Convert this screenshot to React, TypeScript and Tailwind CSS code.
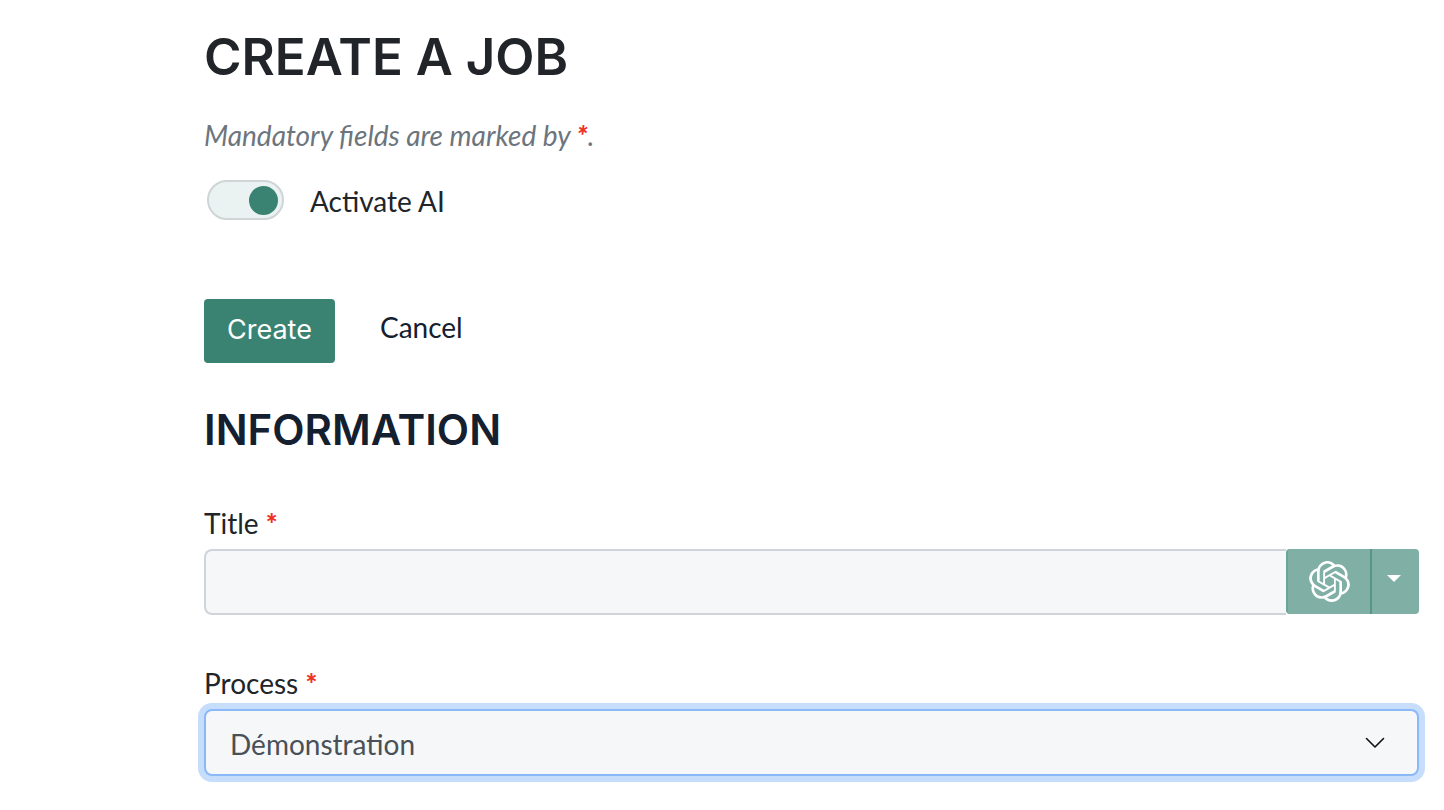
import { useState } from "react";
import { SiOpenai } from "react-icons/si";

function Required() {
  return <span className="font-black text-[#ee3124]">*</span>;
}

export default function App() {
  const [ai, setAi] = useState(true);
  const [title, setTitle] = useState("");
  const [process, setProcess] = useState("demo");

  return (
    <main className="bg-white pt-7 pr-[25px] pb-8 pl-51 font-['Lato',sans-serif] text-[28px] leading-10 text-[#212529]">
      <h1 className="font-['Inter',sans-serif] text-[51px] leading-[58px] font-semibold">CREATE A JOB</h1>
      <p className="mt-[29px] text-[#6c757d] italic">
        Mandatory fields are marked by <Required />.
      </p>

      <div className="mt-6 ml-[3px] flex items-center">
        <input
          id="ai"
          type="checkbox"
          role="switch"
          checked={ai}
          onChange={(e) => setAi(e.target.checked)}
          className="flex h-10 w-[77px] appearance-none items-center rounded-full border-2 border-[#cfd4d6] bg-[#eaf3f2] px-1 before:size-[29px] before:rounded-full before:bg-[#6c757d] checked:justify-end checked:before:bg-[#3a8373]"
        />
        <label htmlFor="ai" className="pt-0.5 pl-[26px]">
          Activate AI
        </label>
      </div>

      <div className="mt-[78px] flex items-start">
        <button
          type="button"
          className="h-16 rounded bg-[#3a8373] px-[23px] pb-0.5 font-['Inter',sans-serif] text-[27px] text-white"
        >
          Create
        </button>
        <a href="#cancel" className="ml-[45px] pt-2 text-[#14202f]">
          Cancel
        </a>
      </div>

      <h2 className="mt-[42px] font-['Inter',sans-serif] text-[42px] leading-[50px] font-semibold text-[#14202f]">
        INFORMATION
      </h2>

      <div className="mt-12">
        <label htmlFor="title" className="block">
          Title <Required />
        </label>
        <div className="mt-1.5 flex h-[66px] items-start">
          <input
            id="title"
            value={title}
            onChange={(e) => setTitle(e.target.value)}
            className="h-full min-w-0 flex-1 rounded-l-lg border-2 border-r-0 border-[#ced4da] bg-[#f5f7f9] px-6 outline-none"
          />
          <button
            type="button"
            aria-label="Generate with AI"
            className="flex h-[65px] w-[84px] items-center justify-center rounded-l border-l-2 border-[#6ba395] bg-[#7fafa5] text-white"
          >
            <SiOpenai className="size-[41px]" />
          </button>
          <button
            type="button"
            aria-label="More options"
            className="flex h-[65px] w-[49px] items-center justify-center rounded-r border-l-2 border-[#579586] bg-[#7fafa5] pr-1 pb-1.5"
          >
            <svg viewBox="0 0 14 7" className="h-[7px] w-3.5 fill-white" aria-hidden="true">
              <path d="M0 0h14L7 7z" />
            </svg>
          </button>
        </div>
      </div>

      <div className="mt-12">
        <label htmlFor="process" className="block">
          Process <Required />
        </label>
        <div className="mt-1.5 grid items-center">
          <select
            id="process"
            value={process}
            onChange={(e) => setProcess(e.target.value)}
            className="col-start-1 row-start-1 h-[67px] w-full appearance-none rounded-lg border-2 border-[#8bb9f8] bg-[#f5f7f9] px-6 pt-0.5 text-[#495057] ring-6 ring-[#c6ddfc] outline-none"
          >
            <option value="demo">Démonstration</option>
          </select>
          <svg
            viewBox="0 0 20 12"
            className="pointer-events-none col-start-1 row-start-1 mr-[34px] h-3 w-5 justify-self-end fill-none stroke-[#111] stroke-[1.6]"
            aria-hidden="true"
          >
            <path d="M1.500 1.500 10 10l8.500-8.500" strokeLinecap="round" strokeLinejoin="round" />
          </svg>
        </div>
      </div>
    </main>
  );
}
